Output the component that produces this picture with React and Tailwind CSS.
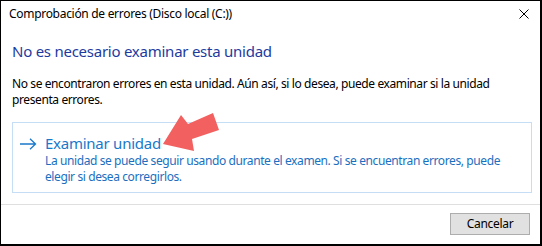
import React from "react";

const font = { fontFamily: '"Noto Sans", "Open Sans", sans-serif' };

export default function App() {
  return (
    <div
      className="relative w-[542px] h-[246px] bg-white border-t border-l border-r-2 border-b-2 border-black flex flex-col text-black"
      style={font}
    >
      {/* barra de título */}
      <div className="flex items-center justify-between h-[28px] pl-[8px] pr-[11px] pb-[2px]">
        <span className="text-[12px] leading-[16px] tracking-[-0.3px]">Comprobación de errores (Disco local (C:))</span>
        <svg width="10" height="10" viewBox="0 0 10 10" className="text-black">
          <path d="M0.5 0.5 L9.5 9.5 M9.5 0.5 L0.5 9.5" stroke="currentColor" strokeWidth="1" />
        </svg>
      </div>

      {/* contenido */}
      <div className="flex flex-col px-[11px] flex-1">
        <h1 className="text-[15px] leading-[20px] tracking-[-0.25px] text-[#1e3a9e] mt-[12px]">
          No es necesario examinar esta unidad
        </h1>
        <p className="text-[12px] leading-[16px] tracking-[-0.4px] mt-[15px]">
          No se encontraron errores en esta unidad. Aún así, si lo desea, puede examinar si la unidad
          <br />
          presenta errores.
        </p>

        <div className="mt-[14px] border border-[#c5def5] h-[71px] w-[520px] flex pt-[10px] pl-[7px]">
          <svg width="17" height="12" viewBox="0 0 17 12" className="mt-[5px] shrink-0 text-[#1979ca]">
            <path d="M0 6 H15.5 M10 0.8 L15.5 6 L10 11.2" fill="none" stroke="currentColor" strokeWidth="1.3" />
          </svg>
          <div className="flex flex-col ml-[8px]">
            <span className="text-[15px] leading-[20px] tracking-[-0.25px] text-[#1979ca]">Examinar unidad</span>
            <span className="text-[12px] leading-[16px] tracking-[-0.4px] text-[#1a6fc0] whitespace-nowrap">
              La unidad se puede seguir usando durante el examen. Si se encuentran errores, puede
              <br />
              elegir si desea corregirlos.
            </span>
          </div>
        </div>
      </div>

      {/* pie */}
      <div className="border-t border-[#dfdfdf] h-[40px] flex items-start justify-end pr-[10px] pt-[8px]">
        <button className="w-[80px] h-[22px] bg-[#e1e1e1] border border-[#adadad] text-[12px] leading-[16px] tracking-[-0.3px]">
          Cancelar
        </button>
      </div>

      {/* flecha roja */}
      <svg
        className="absolute left-0 top-0 pointer-events-none"
        width="542"
        height="246"
        viewBox="0 0 542 246"
      >
        <polygon
          points="162,143 180,114 187,123 212,112 218,129 191,138 193,150"
          fill="#f26060"
        />
      </svg>
    </div>
  );
}
